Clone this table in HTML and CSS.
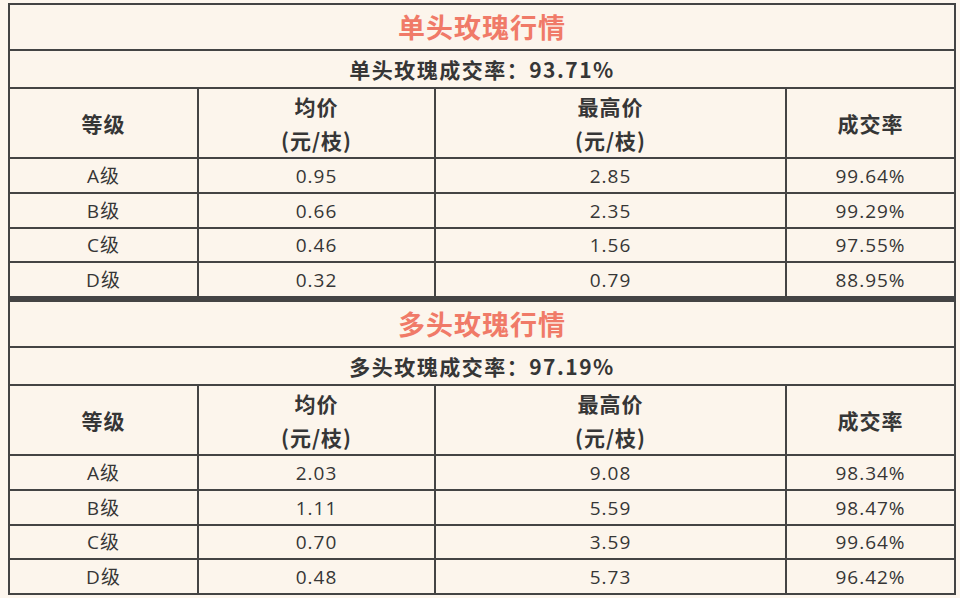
FILE: index.html
```html
<!DOCTYPE html>
<html lang="zh-CN">
<head>
<meta charset="utf-8">
<title>玫瑰行情</title>
<link rel="stylesheet" href="styles.css">
</head>
<body>
<div class="page">
  <table class="market">
    <colgroup><col class="c1"><col class="c2"><col class="c3"><col class="c4"></colgroup>
    <tr class="r-title"><td colspan="4">单头玫瑰行情</td></tr>
    <tr class="r-sub"><td colspan="4">单头玫瑰成交率：93.71%</td></tr>
    <tr class="r-head"><td>等级</td><td>均价<br>(元/枝)</td><td>最高价<br>(元/枝)</td><td>成交率</td></tr>
    <tr class="r-data"><td>A级</td><td>0.95</td><td>2.85</td><td>99.64%</td></tr>
    <tr class="r-data"><td>B级</td><td>0.66</td><td>2.35</td><td>99.29%</td></tr>
    <tr class="r-data short"><td>C级</td><td>0.46</td><td>1.56</td><td>97.55%</td></tr>
    <tr class="r-data"><td>D级</td><td>0.32</td><td>0.79</td><td>88.95%</td></tr>
  </table>
  <table class="market second">
    <colgroup><col class="c1"><col class="c2"><col class="c3"><col class="c4"></colgroup>
    <tr class="r-title"><td colspan="4">多头玫瑰行情</td></tr>
    <tr class="r-sub"><td colspan="4">多头玫瑰成交率：97.19%</td></tr>
    <tr class="r-head"><td>等级</td><td>均价<br>(元/枝)</td><td>最高价<br>(元/枝)</td><td>成交率</td></tr>
    <tr class="r-data"><td>A级</td><td>2.03</td><td>9.08</td><td>98.34%</td></tr>
    <tr class="r-data"><td>B级</td><td>1.11</td><td>5.59</td><td>98.47%</td></tr>
    <tr class="r-data short"><td>C级</td><td>0.70</td><td>3.59</td><td>99.64%</td></tr>
    <tr class="r-data"><td>D级</td><td>0.48</td><td>5.73</td><td>96.42%</td></tr>
  </table>
</div>
</body>
</html>
```
FILE: styles.css
```css
html, body {
  margin: 0;
  padding: 0;
  background: #fdf6ee;
}
body {
  font-family: "Open Sans", "Noto Sans CJK SC", sans-serif;
  color: #363636;
}
.page {
  padding: 3px 0 0 8px;
}
.market {
  width: 948px;
  table-layout: fixed;
  border-collapse: separate;
  border-spacing: 0;
  border-top: 2px solid #444;
  border-left: 2px solid #444;
  background: #fcf5ec;
}
.market.second {
  border-top-width: 4px;
}
.c1 { width: 189px; }
.c2 { width: 237px; }
.c3 { width: 351px; }
.c4 { width: 169px; }
.market td {
  border-right: 2px solid #444;
  border-bottom: 2px solid #444;
  padding: 0;
  text-align: center;
  vertical-align: middle;
  letter-spacing: 1px;
  box-sizing: border-box;
}
.r-title td {
  height: 46px;
  font-family: "Noto Sans CJK SC", sans-serif;
  font-size: 27px;
  font-weight: 700;
  color: #f07a68;
  line-height: 44px;
}
.r-sub td {
  height: 38px;
  font-family: "Noto Sans CJK SC", sans-serif;
  font-size: 21px;
  font-weight: 700;
  line-height: 36px;
  letter-spacing: 1.5px;
}
.r-head td {
  height: 70px;
  font-family: "Noto Sans CJK SC", sans-serif;
  font-size: 21px;
  font-weight: 700;
  line-height: 34px;
}
.r-data td {
  height: 35px;
  font-size: 19px;
  line-height: 32px;
}
.r-data.short td {
  height: 34px;
}
```
